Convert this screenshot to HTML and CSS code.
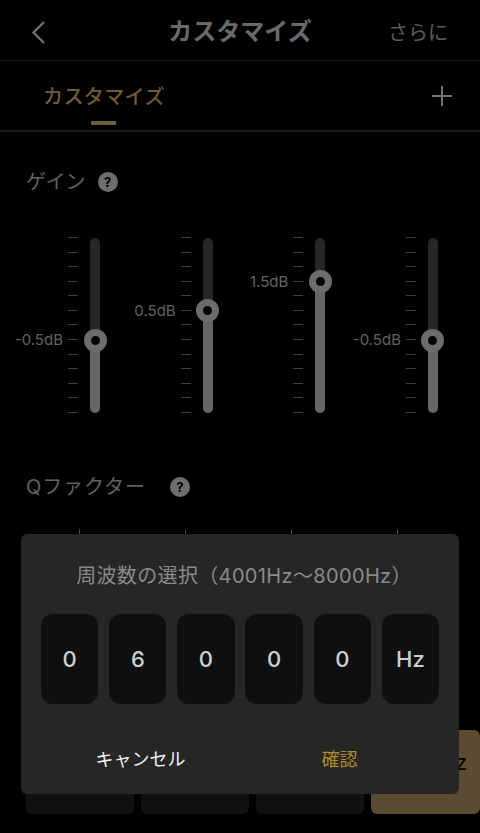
FILE: index.html
```html
<!DOCTYPE html>
<html lang="ja">
<head>
<meta charset="utf-8">
<title>カスタマイズ</title>
<link rel="stylesheet" href="styles.css">
</head>
<body>
<div class="app">
  <header class="nav">
    <svg class="back" width="18" height="26" viewBox="0 0 18 26"><path d="M15 3 4.5 13.5 15 24" fill="none" stroke="#6f6f6f" stroke-width="2.4"/></svg>
    <h1 class="nav-title">カスタマイズ</h1>
    <span class="nav-more">さらに</span>
  </header>
  <div class="tabs">
    <div class="tab">カスタマイズ<span class="tab-bar"></span></div>
    <svg class="plus" width="20" height="20" viewBox="0 0 20 20"><path d="M10 0v20M0 10h20" stroke="#757575" stroke-width="2"/></svg>
  </div>
  <section class="gain">
    <div class="section-head"><span>ゲイン</span><span class="help">?</span></div>
    <div class="bands">
      <div class="band"><div class="ticks"><i></i><i></i><i></i><i></i><i></i><i></i><i></i><i></i><i></i><i></i><i></i><i></i><i></i><span class="value" style="top:58.3%">-0.5dB</span></div><div class="track"><div class="fill" style="height:41.7%"><b class="thumb"></b></div></div></div>
      <div class="band"><div class="ticks"><i></i><i></i><i></i><i></i><i></i><i></i><i></i><i></i><i></i><i></i><i></i><i></i><i></i><span class="value" style="top:41.7%">0.5dB</span></div><div class="track"><div class="fill" style="height:58.3%"><b class="thumb"></b></div></div></div>
      <div class="band"><div class="ticks"><i></i><i></i><i></i><i></i><i></i><i></i><i></i><i></i><i></i><i></i><i></i><i></i><i></i><span class="value" style="top:25%">1.5dB</span></div><div class="track"><div class="fill" style="height:75%"><b class="thumb"></b></div></div></div>
      <div class="band"><div class="ticks"><i></i><i></i><i></i><i></i><i></i><i></i><i></i><i></i><i></i><i></i><i></i><i></i><i></i><span class="value" style="top:58.3%">-0.5dB</span></div><div class="track"><div class="fill" style="height:41.7%"><b class="thumb"></b></div></div></div>
    </div>
  </section>
  <section class="q">
    <div class="section-head"><span class="q-label">Qファクター</span><span class="help">?</span></div>
    <div class="q-ticks"><i></i><i></i><i></i><i></i></div>
  </section>
  <div class="freqs">
    <div class="freq"></div>
    <div class="freq"></div>
    <div class="freq"></div>
    <div class="freq active">6000Hz</div>
  </div>
  <div class="dialog">
    <div class="dialog-title">周波数の選択（4001Hz～8000Hz）</div>
    <div class="digits">
      <div class="digit">0</div>
      <div class="digit">6</div>
      <div class="digit">0</div>
      <div class="digit">0</div>
      <div class="digit">0</div>
      <div class="digit">Hz</div>
    </div>
    <div class="actions">
      <span class="cancel">キャンセル</span>
      <span class="ok">確認</span>
    </div>
  </div>
</div>
</body>
</html>
```
FILE: styles.css
```css
* { box-sizing: border-box; }
html, body { margin: 0; background: #000; }
body { font-family: "Inter", "Liberation Sans", "Noto Sans CJK JP", sans-serif; }
.app { position: relative; width: 480px; height: 833px; overflow: hidden; background: #000; }
.nav { position: relative; height: 61px; border-bottom: 1px solid #1a1a1a; display: flex; align-items: center; justify-content: center; }
.back { position: absolute; left: 29px; top: 19px; }
.nav-title { margin: 0; font-size: 24px; font-weight: 700; color: #6a6a6a; line-height: 1; position: relative; top: 2px; }
.nav-more { position: absolute; right: 32px; top: 21px; font-size: 20px; line-height: 24px; color: #5c5c5c; }
.tabs { height: 71px; border-bottom: 2px solid #1a1a1a; display: flex; align-items: center; justify-content: space-between; padding: 0 28px 0 43px; }
.tab { position: relative; font-size: 20px; font-weight: 500; color: #6e5b39; line-height: 1; top: 1px; letter-spacing: 0.4px; }
.tab-bar { position: absolute; left: 48px; top: 34px; width: 25px; height: 4px; background: #6e5b39; }
.plus { position: relative; top: 0.5px; }
.gain { padding: 0 0 0 26px; }
.section-head { display: flex; align-items: center; gap: 12px; font-size: 20px; line-height: 24px; color: #626262; }
.gain .section-head { margin-top: 38px; }
.help { width: 20px; height: 20px; border-radius: 50%; background: #6e6e6e; color: #000; font-size: 13px; font-weight: 700; line-height: 20px; text-align: center; }
.bands { display: grid; grid-template-columns: repeat(4, 112.67px); margin: 43px 0 0 42px; }
.band { display: flex; align-items: flex-start; gap: 12px; }
.ticks { position: relative; width: 10px; height: 176px; display: flex; flex-direction: column; justify-content: space-between; }
.ticks i { display: block; width: 10px; height: 1px; background: #3d3d3d; }
.value { position: absolute; right: 15px; font-size: 15px; line-height: 16px; margin-top: -7.5px; color: #626262; white-space: nowrap; }
.track { position: relative; width: 10px; height: 175px; margin-top: 1px; background: #262626; border-radius: 5px; }
.fill { position: absolute; left: 0; right: 0; bottom: 0; background: #666; border-radius: 5px; }
.thumb { position: absolute; left: -6.5px; top: -11.5px; width: 23px; height: 23px; border-radius: 50%; border: 7.5px solid #6c6c6c; background: #000; }
.q { padding: 0 0 0 26px; }
.q .section-head { margin-top: 62px; gap: 24px; }
.q-label { letter-spacing: 0.9px; }
.q-ticks { display: grid; grid-template-columns: repeat(4, 106.2px); margin: 30px 0 0 52.5px; }
.q-ticks i { display: block; width: 1px; height: 12px; background: #4a4a4a; }
.freqs { position: absolute; left: 26px; top: 730px; display: flex; gap: 7px; }
.freq { width: 108px; height: 83.5px; background: #111; border-radius: 6px; }
.freq.active { width: 109px; background: #5a4b32; color: #000; display: flex; align-items: center; justify-content: center; padding-bottom: 20px; font-size: 22px; line-height: 1; }
.dialog { position: absolute; left: 21px; top: 534px; width: 438px; height: 260px; background: #262626; border-radius: 6px; padding-top: 29px; }
.dialog-title { text-align: center; font-size: 20px; line-height: 26px; color: #8a8a8a; height: 26px; letter-spacing: 0.35px; padding-left: 8px; }
.digits { display: flex; gap: 10.8px; padding: 0 20px; margin-top: 25px; }
.digit { flex: 1; height: 89.5px; background: #0f0f0f; border-radius: 12px; display: flex; align-items: center; justify-content: center; font-size: 22px; font-weight: 500; color: #cfcfcf; }
.actions { display: grid; grid-template-columns: 1fr 1fr; padding: 0 20px; margin-top: 44px; text-align: center; font-size: 18px; line-height: 24px; }
.cancel { color: #f0f0f0; }
.ok { color: #b08a26; }
```
